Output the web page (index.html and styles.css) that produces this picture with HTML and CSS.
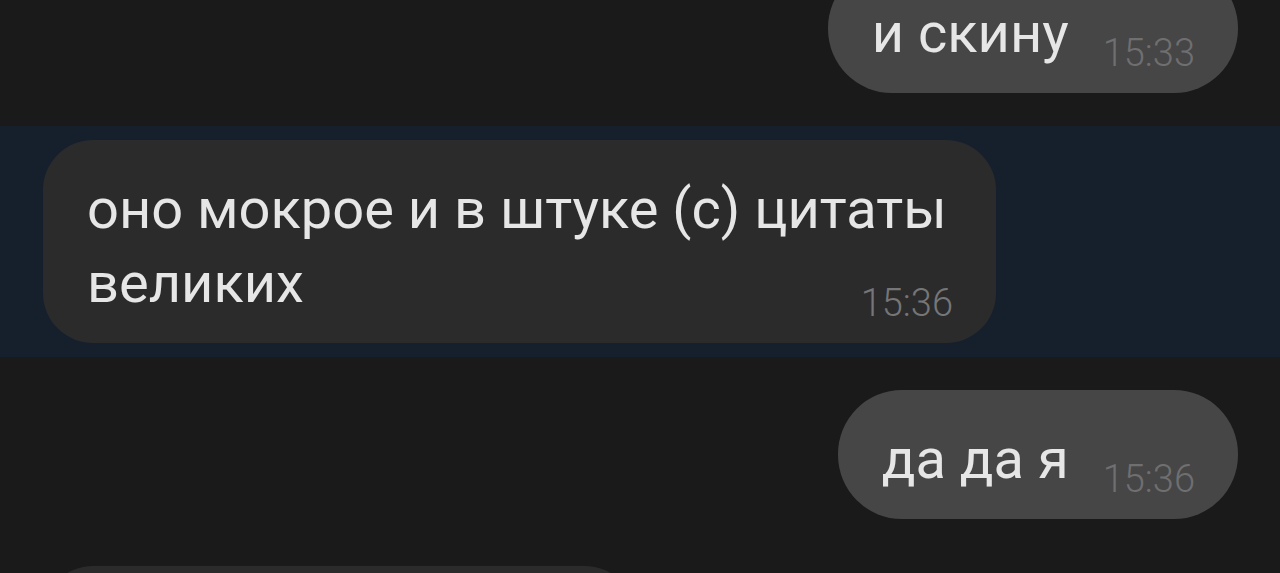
FILE: index.html
```html
<!DOCTYPE html>
<html lang="ru">
<head>
    <meta charset="UTF-8">
    <meta name="viewport" content="width=device-width, initial-scale=1.0">
    <title>Чат</title>
    <link rel="stylesheet" href="styles.css">
</head>
<body>
    <div class="chat">
        <div class="msg out">
            <div class="bubble">и скину<span class="time">15:33</span></div>
        </div>
        <div class="msg in selected">
            <div class="bubble">оно мокрое и в штуке (с) цитаты великих<span class="time">15:36</span></div>
        </div>
        <div class="msg out">
            <div class="bubble">да да я<span class="time">15:36</span></div>
        </div>
        <div class="msg in">
            <div class="bubble">а что за штука<span class="time">15:37</span></div>
        </div>
    </div>
</body>
</html>
```

FILE: styles.css
```css
body {
    margin: 0;
    padding: 0;
    background-color: #1a1a1a;
    font-family: Roboto, "Noto Sans", sans-serif;
    overflow: hidden;
}
.chat {
    display: flex;
    flex-direction: column;
    gap: 19px;
    margin-top: -50px; /* scrolled list, first bubble cut off */
}
.msg {
    display: flex;
    padding: 14px 42px 14px 43px;
}
.msg.out {
    justify-content: flex-end;
}
.msg.selected {
    background-color: #16202d;
}
.bubble {
    max-width: 953px;
    box-sizing: border-box;
    padding: 32px 43px 23px 44px;
    border-radius: 50px;
    font-size: 56px;
    line-height: 74px;
    color: #e6e6e6;
}
.out .bubble {
    background-color: #464647;
    border-radius: 64px;
}
.in .bubble {
    background-color: #2b2b2c;
}
.time {
    float: right;
    margin: 44px 0 0 34px;
    font-size: 38px;
    font-weight: 300;
    line-height: 26px;
    color: #6f6f70;
}
.in .time {
    color: #767677;
}
```
